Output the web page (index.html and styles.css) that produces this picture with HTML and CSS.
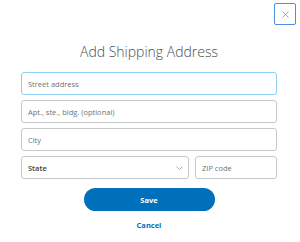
FILE: index.html
```html
<!DOCTYPE html>
<html lang="en">
<head>
  <meta charset="UTF-8" />
  <title>Add Shipping Address</title>
  <link rel="stylesheet" href="styles.css">
</head>
<body>
  <div class="modal">
    <div class="top">
      <button class="close" aria-label="Close">
        <svg width="7" height="7" viewBox="0 0 7 7"><path d="M0.5 0.5L6.5 6.5M6.5 0.5L0.5 6.5" stroke="#8a8f94" stroke-width="0.8"/></svg>
      </button>
    </div>
    <h1>Add Shipping Address</h1>

    <form class="fields">
      <input type="text" class="field focused" placeholder="Street address">
      <input type="text" class="field" placeholder="Apt., ste., bldg. (optional)">
      <input type="text" class="field" placeholder="City">
      <div class="row">
        <div class="select">
          <span>State</span>
          <svg width="7" height="4" viewBox="0 0 7 4"><path d="M0.5 0.5L3.5 3.5L6.5 0.5" fill="none" stroke="#9aa0a5" stroke-width="0.8"/></svg>
        </div>
        <input type="text" class="field zip" placeholder="ZIP code">
      </div>
    </form>

    <button class="save">Save</button>
    <a class="cancel" href="#">Cancel</a>
  </div>
</body>
</html>
```

FILE: styles.css
```css
body {
  margin: 0;
  font-family: "Open Sans", "Noto Sans", sans-serif;
  background: #fff;
  color: #2c2e2f;
}
.modal {
  width: 300px;
  display: flex;
  flex-direction: column;
  align-items: center;
}
.top {
  width: 100%;
  display: flex;
  justify-content: flex-end;
  padding: 3px 4px 0 0;
  box-sizing: border-box;
}
.close {
  width: 22px;
  height: 22px;
  padding: 0;
  border: 1px solid #4a8ee6;
  border-radius: 2px;
  background: #fff;
  display: flex;
  align-items: center;
  justify-content: center;
}
h1 {
  margin: 17px 0 0;
  font-size: 14px;
  font-weight: 300;
  color: #4a4d50;
  line-height: 20px;
  transform: translateX(-1px);
}
.fields {
  width: 256px;
  margin-top: 10px;
  display: flex;
  flex-direction: column;
  gap: 5px;
  transform: translateX(-1px);
}
.field {
  height: 23px;
  box-sizing: border-box;
  border: 1px solid #c5c9cc;
  border-radius: 3px;
  padding: 0 6px;
  font-family: inherit;
  font-size: 7.5px;
  color: #2c2e2f;
  outline: none;
}
.field::placeholder {
  color: #6c7378;
}
.field.focused {
  border-color: #8ed0f5;
}
.row {
  display: flex;
  gap: 6px;
}
.select {
  flex: 1;
  height: 23px;
  box-sizing: border-box;
  border: 1px solid #c5c9cc;
  border-radius: 3px;
  padding: 0 5px 0 6px;
  display: flex;
  align-items: center;
  justify-content: space-between;
  font-size: 7.5px;
  font-weight: 600;
  color: #3a3d40;
}
.zip {
  width: 82px;
}
.save {
  margin-top: 9px;
  width: 131px;
  height: 23px;
  border: none;
  border-radius: 12px;
  background: #0070ba;
  color: #fff;
  font-family: inherit;
  font-size: 7.5px;
  font-weight: 700;
  transform: translateX(-1px);
}
.cancel {
  margin-top: 9px;
  font-size: 7.5px;
  font-weight: 700;
  color: #0070ba;
  text-decoration: none;
  transform: translateX(-1px);
}
```
